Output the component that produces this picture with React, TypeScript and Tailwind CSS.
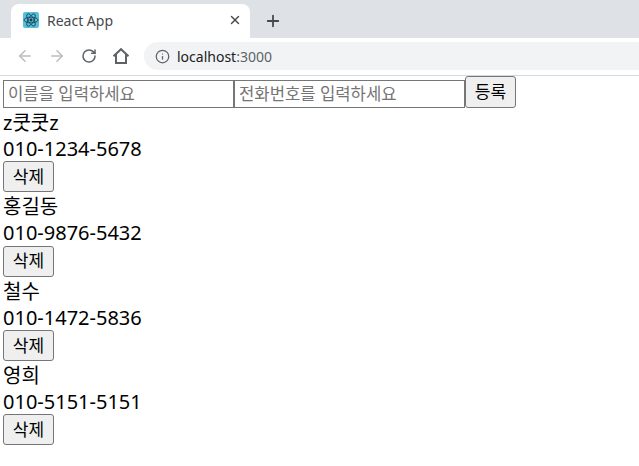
import { ArrowLeft, ArrowRight, RotateCw, Info, X, Plus } from 'lucide-react'

const contacts = [
  { name: 'z쿳쿳z', phone: '010-1234-5678' },
  { name: '홍길동', phone: '010-9876-5432' },
  { name: '철수', phone: '010-1472-5836' },
  { name: '영희', phone: '010-5151-5151' },
]

const font = "font-['Noto_Sans','Noto_Sans_CJK_KR',sans-serif]"

function ReactFavicon() {
  return (
    <svg width="16" height="16" viewBox="0 0 16 16" className="shrink-0">
      <rect width="16" height="16" rx="2" fill="#53c1de" />
      <g fill="none" stroke="#1c3a4a" strokeWidth="0.8">
        <ellipse cx="8" cy="8" rx="7" ry="2.8" />
        <ellipse cx="8" cy="8" rx="7" ry="2.8" transform="rotate(60 8 8)" />
        <ellipse cx="8" cy="8" rx="7" ry="2.8" transform="rotate(120 8 8)" />
      </g>
      <circle cx="8" cy="8" r="1.4" fill="#1c3a4a" />
    </svg>
  )
}

function HomeIcon() {
  return (
    <svg width="18" height="18" viewBox="0 0 18 18" className="ml-[15px] shrink-0 text-[#5f6368]">
      <path d="M1.5 9.2 9 2.2l7.5 7M4 7.5v8.6h10V7.5" fill="none" stroke="currentColor" strokeWidth="2" />
    </svg>
  )
}

function BrowserChrome() {
  return (
    <div className={`${font} border-b border-[#d9d9d9]`}>
      {/* tab strip */}
      <div className="flex h-[38px] items-end bg-[#dee1e6] pl-[11px]">
        <div className="flex h-[34px] w-[239px] items-center rounded-t-lg bg-white pb-[2px] pl-3 pr-[8px]">
          <ReactFavicon />
          <span className="ml-2 flex-1 text-[14px] text-[#45494d]">React App</span>
          <X size={14} strokeWidth={2.4} className="text-[#45494d]" />
        </div>
        <Plus size={18} strokeWidth={2.4} className="mb-[8px] ml-[14px] text-[#45494d]" />
      </div>
      {/* toolbar */}
      <div className="flex h-[37px] items-start bg-white pl-4 pt-[4px]">
        <div className="flex h-[28px] items-center">
          <ArrowLeft size={18} className="text-[#bbbdc0]" />
          <ArrowRight size={18} className="ml-[14px] text-[#bbbdc0]" />
          <RotateCw size={16} strokeWidth={2.3} className="ml-[15px] text-[#5f6368]" />
          <HomeIcon />
        </div>
        <div className="ml-[14px] flex h-[28px] flex-1 items-center rounded-l-full bg-[#f1f3f4] pl-[11px]">
          <Info size={15} className="text-[#5f6368]" />
          <span className="ml-[7px] text-[14px] text-[#202124]">
            localhost<span className="text-[#5f6368]">:3000</span>
          </span>
        </div>
      </div>
    </div>
  )
}

function FormButton({ label, className }: { label: string; className: string }) {
  return (
    <button type="button" className={`${className} w-[51px] rounded-[3px] border border-[#767676] bg-[#efefef] text-[17px] text-black`}>
      {label}
    </button>
  )
}

export default function App() {
  return (
    <div className={`${font} h-[466px] w-[639px] overflow-hidden bg-white text-black`}>
      <BrowserChrome />
      <div className="px-[3px]">
        <form className="flex items-end">
          <input
            placeholder="이름을 입력하세요"
            className="h-[28px] w-[231px] border border-[#767676] px-[4px] pb-[2px] text-[16.67px] placeholder:text-[#757575]"
          />
          <input
            placeholder="전화번호를 입력하세요"
            className="h-[28px] w-[231px] border border-[#767676] px-[4px] pb-[2px] text-[16.67px] placeholder:text-[#757575]"
          />
          <FormButton label="등록" className="h-[32px]" />
        </form>
        {contacts.map((c) => (
          <div key={c.phone} className="text-[20px]">
            <div className="mt-[2px] leading-[25px]">{c.name}</div>
            <div className="pt-[2px] leading-[24.33px]">{c.phone}</div>
            <FormButton label="삭제" className="block h-[31px]" />
          </div>
        ))}
      </div>
    </div>
  )
}
